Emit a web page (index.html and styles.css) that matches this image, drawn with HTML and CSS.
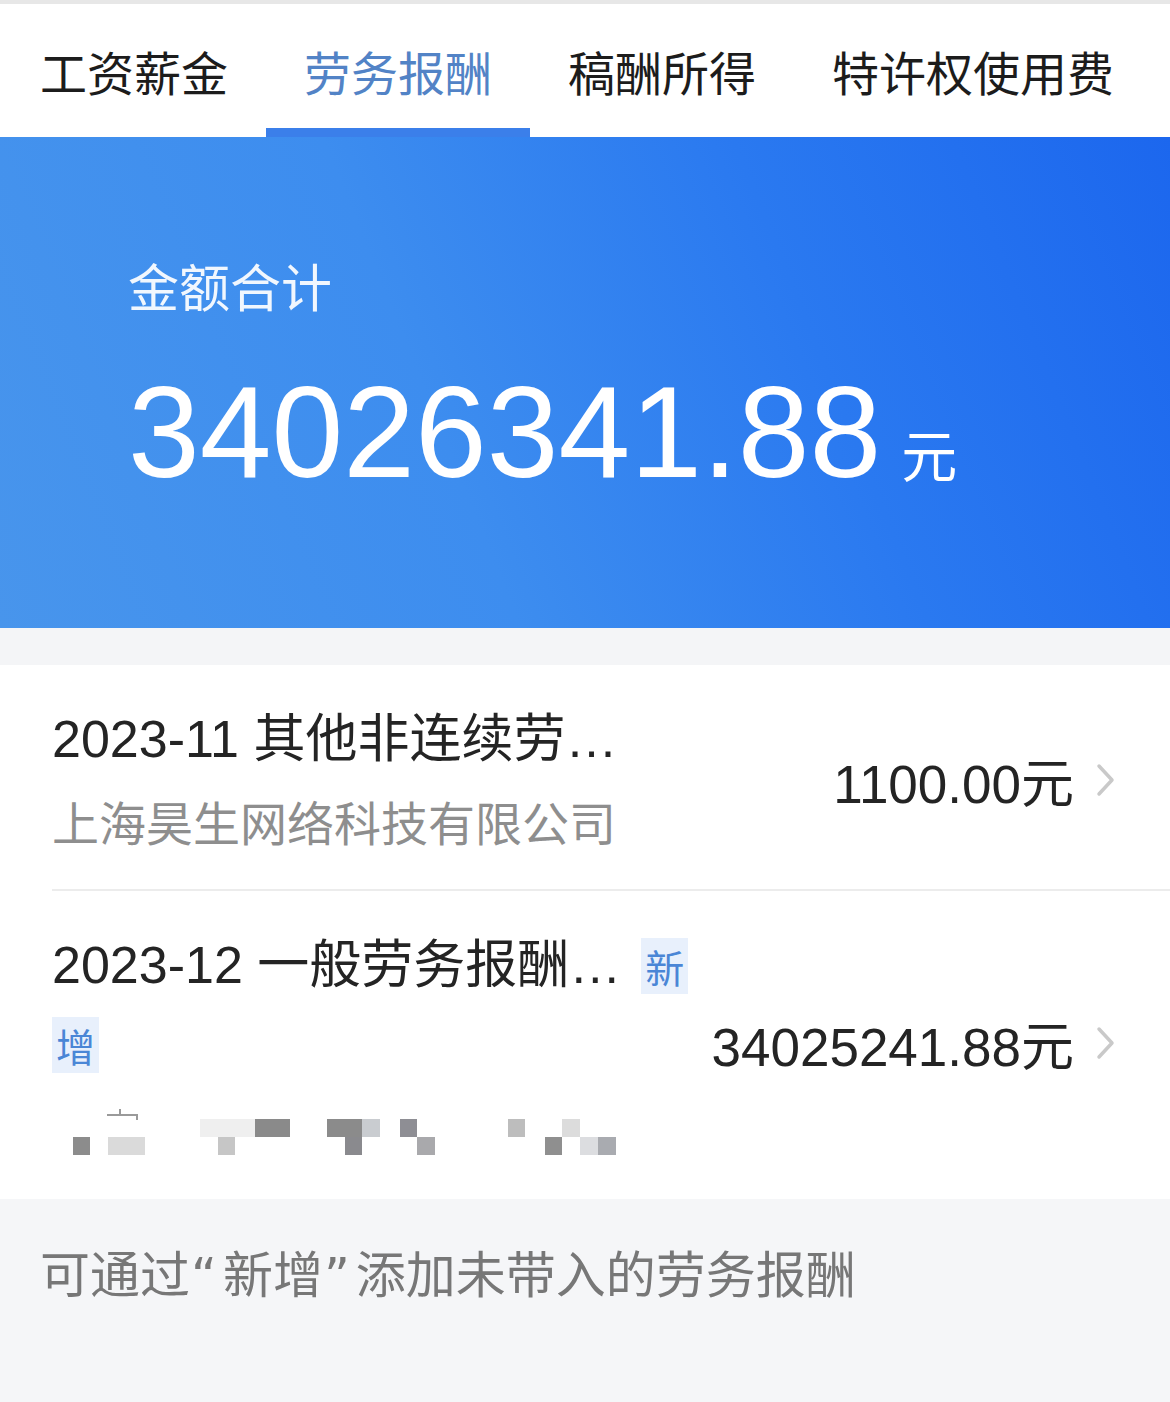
FILE: index.html
```html
<!DOCTYPE html>
<html>
<head>
  <meta charset="utf-8">
  <title>劳务报酬</title>
  <link rel="stylesheet" href="styles.css">
</head>
<body>
  <div class="page">
    <nav class="tabs">
      <div class="tab">工资薪金</div>
      <div class="tab active">劳务报酬</div>
      <div class="tab">稿酬所得</div>
      <div class="tab">特许权使用费</div>
    </nav>

    <section class="summary">
      <div class="summary-label">金额合计</div>
      <div class="summary-total">
        <span class="total-num">34026341.88</span>
        <span class="total-unit">元</span>
      </div>
    </section>

    <div class="gap"></div>

    <ul class="records">
      <li class="record">
        <div class="record-main">
          <div class="record-title">2023-11 其他非连续劳…</div>
          <div class="record-payer">上海昊生网络科技有限公司</div>
        </div>
        <div class="record-amount">1100.00元</div>
        <svg class="chevron" width="20" height="34" viewBox="0 0 20 34"><path d="M3 3 L16 17 L3 31" fill="none" stroke="#c9c9c9" stroke-width="3.5" stroke-linecap="round" stroke-linejoin="round"/></svg>
      </li>
      <li class="record">
        <div class="record-main">
          <div class="record-title">2023-12 一般劳务报酬…<span class="tag first">新</span><span class="tag">增</span></div>
          <!-- payer name is pixelated in the source -->
          <svg class="masked" width="570" height="52" viewBox="0 0 570 52">
            <path d="M55 8 h30 v5 M68 2 v6" fill="none" stroke="#9a9a9a" stroke-width="2"/>
            <rect x="21" y="30" width="17" height="18" fill="#8c8c8c"/>
            <rect x="56" y="30" width="37" height="18" fill="#dadada"/>
            <rect x="148" y="12" width="55" height="18" fill="#efefef"/>
            <rect x="166" y="30" width="17" height="18" fill="#c6c6c6"/>
            <rect x="203" y="12" width="35" height="18" fill="#8a8a8a"/>
            <rect x="275" y="12" width="35" height="18" fill="#8b8b8b"/>
            <rect x="310" y="12" width="18" height="18" fill="#c9ccd0"/>
            <rect x="293" y="30" width="17" height="18" fill="#8a8a8e"/>
            <rect x="348" y="12" width="17" height="18" fill="#8e8e94"/>
            <rect x="365" y="30" width="18" height="18" fill="#a9a9ac"/>
            <rect x="456" y="12" width="17" height="18" fill="#bdbdbd"/>
            <rect x="493" y="30" width="17" height="18" fill="#8f8f8f"/>
            <rect x="510" y="12" width="18" height="18" fill="#dcdcdc"/>
            <rect x="528" y="30" width="18" height="18" fill="#dcdde0"/>
            <rect x="546" y="30" width="18" height="18" fill="#a9abb0"/>
          </svg>
        </div>
        <div class="record-amount">34025241.88元</div>
        <svg class="chevron" width="20" height="34" viewBox="0 0 20 34"><path d="M3 3 L16 17 L3 31" fill="none" stroke="#c9c9c9" stroke-width="3.5" stroke-linecap="round" stroke-linejoin="round"/></svg>
      </li>
    </ul>

    <footer class="hint">可通过<span class="q">“</span>新增<span class="q">”</span>添加未带入的劳务报酬</footer>
  </div>
</body>
</html>
```

FILE: styles.css
```css
body {
  margin: 0;
  background-color: #ffffff;
  font-family: "Liberation Sans", "Noto Sans CJK SC", sans-serif;
  color: #222222;
}
.page {
  width: 1170px;
  min-height: 1402px;
  display: flex;
  flex-direction: column;
}

/* tabs */
.tabs {
  display: flex;
  height: 133px;
  border-top: 4px solid #e7e7e7;
  background-color: #ffffff;
}
.tab {
  position: relative;
  padding: 0 38px;
  line-height: 133px;
  font-family: "Noto Sans CJK SC", sans-serif;
  font-size: 47px;
  color: #1c1c1c;
}
.tab:first-child { padding-left: 40px; }
.tab.active { color: #5283c6; }
.tab.active::after {
  content: "";
  position: absolute;
  left: 0;
  right: 0;
  bottom: 0;
  height: 9px;
  background-color: #3b7fea;
}

/* summary banner */
.summary {
  height: 491px;
  box-sizing: border-box;
  padding: 118px 0 0 128px;
  background: linear-gradient(68deg, #4895ec 0%, #3d8def 38%, #2a79f0 68%, #1c67ee 100%);
  color: #ffffff;
}
.summary-label {
  font-family: "Noto Sans CJK SC", sans-serif;
  font-size: 51px;
  line-height: 60px;
  color: rgba(255,255,255,0.93);
}
.summary-total {
  display: flex;
  align-items: baseline;
  margin-top: 53px;
  line-height: 128px;
}
.total-num {
  font-size: 129px;
}
.total-unit {
  margin-left: 20px;
  font-family: "Noto Sans CJK SC", sans-serif;
  font-size: 56px;
}

.gap {
  height: 37px;
  background-color: #f4f5f7;
}

/* records */
.records {
  list-style: none;
  margin: 0;
  padding: 0;
}
.record {
  display: flex;
  align-items: center;
  margin-left: 52px;
  padding: 35px 54px 29px 0;
  border-bottom: 2px solid #ececec;
}
.record:last-child {
  border-bottom: none;
  padding-bottom: 40px;
}
.record-main {
  flex: 0 0 650px;
}
.record-title {
  font-size: 52px;
  line-height: 78px;
  color: #242424;
}
.record-payer {
  margin-top: 4px;
  font-family: "Noto Sans CJK SC", sans-serif;
  font-size: 47px;
  line-height: 78px;
  color: #8e8e8e;
}
.tag {
  padding: 0 4px;
  font-family: "Noto Sans CJK SC", sans-serif;
  font-size: 39px;
  background-color: #e8f0fc;
  color: #4a86d6;
}
.tag.first { margin-left: 20px; }
.masked {
  display: block;
  margin-top: 23px;
}
.record-amount {
  margin-left: auto;
  font-size: 53px;
  white-space: nowrap;
  color: #242424;
}
.chevron {
  flex: none;
  margin-left: 22px;
}

/* hint */
.hint {
  flex: 1;
  padding: 47px 0 0 40px;
  background-color: #f5f6f8;
  font-family: "Liberation Sans", "Noto Sans CJK SC", sans-serif;
  font-size: 50px;
  line-height: 60px;
  color: #777777;
}
.hint .q {
  margin: 0 6px 0 1px;
  font-family: "DejaVu Sans", sans-serif;
}
```
